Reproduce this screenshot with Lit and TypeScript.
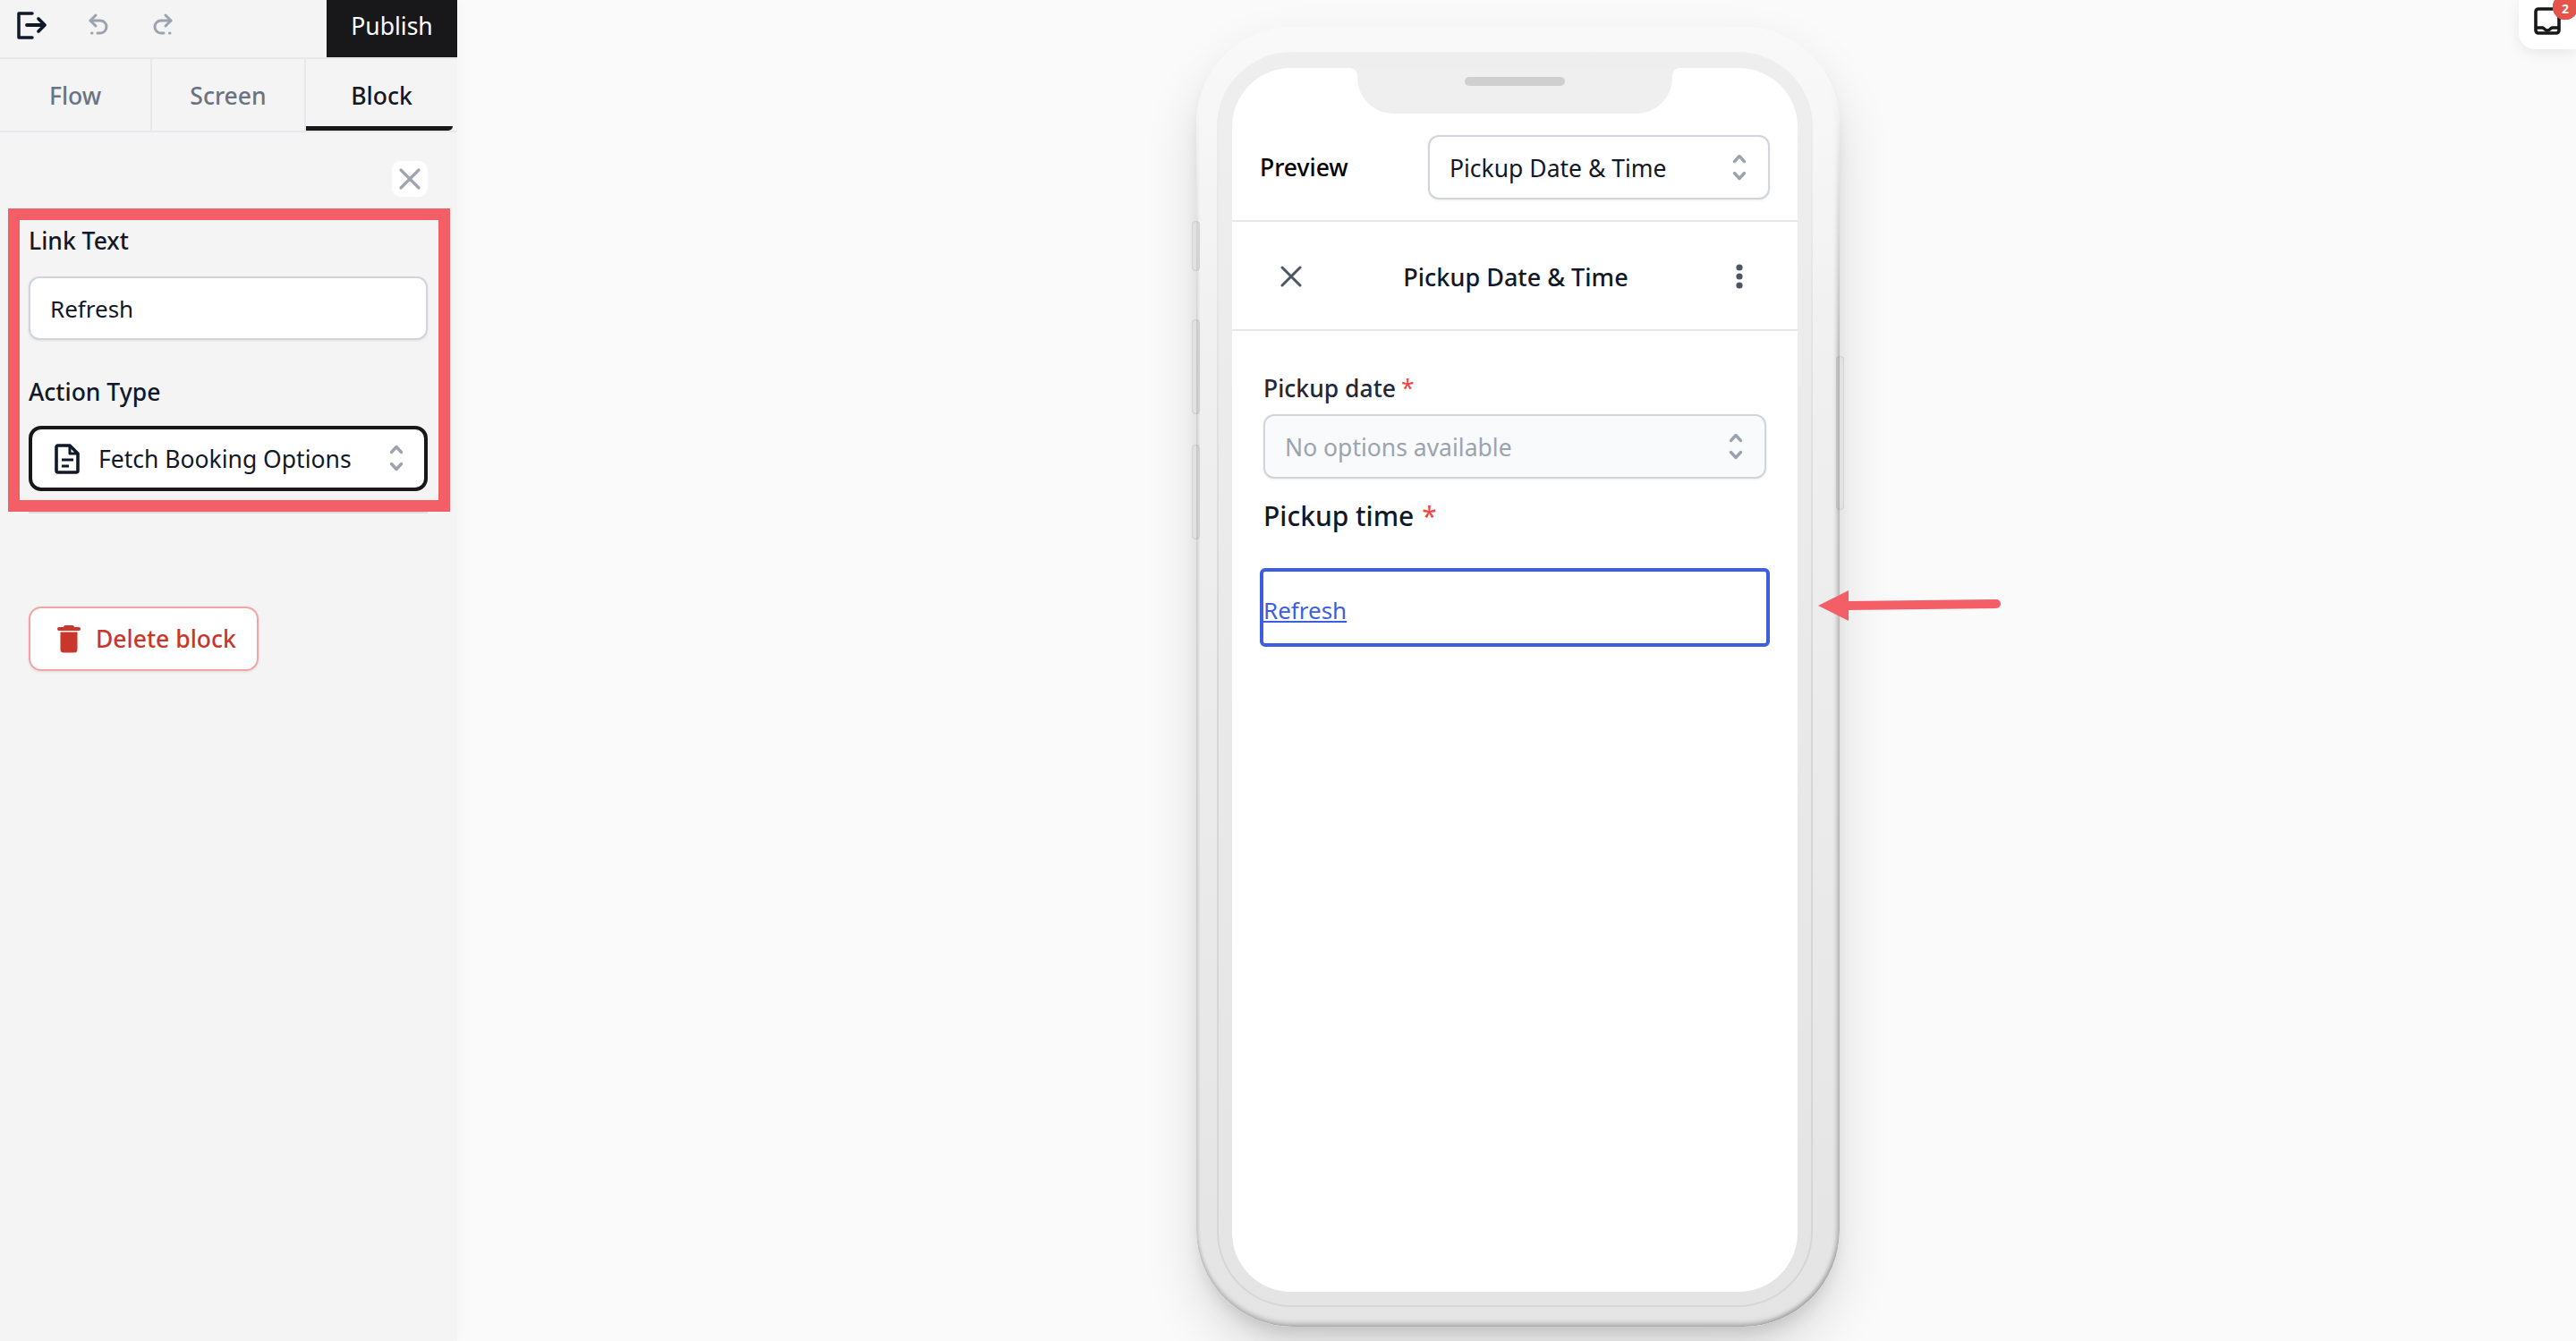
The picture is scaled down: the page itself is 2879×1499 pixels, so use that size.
import { LitElement, html, css } from "lit";
import { customElement } from "lit/decorators.js";

const chevrons = (cls: string) => html`<svg class=${cls} viewBox="0 0 16 32" fill="none" stroke="currentColor" stroke-width="3.4" stroke-linecap="round" stroke-linejoin="round"><path d="M2.500 9.500 8 3.500l5.500 6"/><path d="M2.500 22.500 8 28.500l5.500-6"/></svg>`;

@customElement("app-root")
export class AppRoot extends LitElement {
  static styles = css`
    :host { display: block; height: 1499px; overflow: hidden; font-family: "Noto Sans", "Open Sans", sans-serif; color: #111827; position: relative; }
    * { box-sizing: border-box; }
    .page { display: flex; height: 1499px; background: #fafafa; }
    .side { width: 511px; flex: none; background: #f4f4f5; box-shadow: 4px 0 12px rgba(0,0,0,.02); position: relative; display: flex; flex-direction: column; }
    .top { height: 66px; flex: none; display: flex; border-bottom: 2px solid #e7e7ec; }
    .tools { flex: 1; position: relative; }
    .tool { position: absolute; top: 12px; }
    .publish { width: 146px; height: 64px; background: #18181b; color: #fff; display: flex; align-items: center; justify-content: center; font-size: 26.5px; padding-bottom: 6px; }
    .tabs { height: 82px; flex: none; display: flex; border-bottom: 2px solid #e7e7ec; }
    .tab { width: 170px; display: flex; align-items: center; justify-content: center; font-size: 26.5px; font-weight: 500; color: #6b7280; border-right: 2px solid #e7e7ec; padding-top: 2px; }
    .tab.wide { width: 172px; }
    .tab.on { color: #111827; border-right: 0; width: 169px; position: relative; }
    .tab.on::after { content: ""; position: absolute; left: 0; right: 5px; bottom: 0; height: 5px; background: #18181b; border-bottom-right-radius: 8px; }
    .body { padding: 32px 33px 0 32px; display: flex; flex-direction: column; }
    .close { align-self: flex-end; width: 40px; height: 40px; border-radius: 10px; background: #fff; display: flex; align-items: center; justify-content: center; color: #a1a5b0; }
    .fields { width: 446px; height: 354px; border-bottom: 2px solid #dcdce4; }
    .label { font-size: 26.5px; font-weight: 500; line-height: 40px; color: #111827; }
    .l1 { margin-top: 29px; }
    .l2 { margin-top: 38px; }
    .input { height: 71px; margin-top: 20px; border-radius: 12px; border: 2px solid #d1d5db; background: #fff; display: flex; align-items: center; padding-left: 22px; font-size: 26px; box-shadow: 0 1px 3px rgba(0,0,0,.08); }
    .action { height: 73px; margin-top: 18px; border: 4px solid #18181b; border-radius: 14px; background: #fff; display: flex; align-items: center; position: relative; font-size: 26.5px; }
    .doc { width: 28px; height: 34px; margin-left: 25px; margin-right: 21px; }
    .action .chev { position: absolute; right: 23px; top: 16px; }
    .chev { width: 16px; height: 32px; color: #9ca3af; }
    .del { width: 257px; height: 72px; margin-top: 104px; border: 2px solid #f3a5a5; border-radius: 14px; background: #fff; color: #c8362c; display: flex; align-items: center; font-size: 26.5px; font-weight: 500; box-shadow: 0 1px 3px rgba(0,0,0,.1); }
    .del svg { width: 26px; height: 32px; margin-left: 30px; margin-right: 17px; }
    .red { position: absolute; left: 9px; top: 233px; width: 494px; height: 339px; border: 13px solid #f45f67; pointer-events: none; }
    .main { flex: 1; display: flex; justify-content: center; padding: 30px 0 0 3px; position: relative; }
    .phone { width: 719px; height: 1453px; border-radius: 108px; padding: 28px 30px 22px 23px; position: relative;
      background: linear-gradient(#f9f9f9, #f0f0f0 25%, #e4e4e4 100%);
      box-shadow: 0 30px 60px rgba(0,0,0,.13), 0 14px 18px -6px rgba(0,0,0,.12); }
    .phone::after { content: ""; position: absolute; inset: 0; border-radius: 108px; pointer-events: none;
      box-shadow: inset 0 -4px 5px rgba(0,0,0,.2), inset -4px 0 4px rgba(0,0,0,.15), inset 3px 0 3px rgba(0,0,0,.05);
      -webkit-mask-image: linear-gradient(transparent 60px, #000 360px); mask-image: linear-gradient(transparent 60px, #000 360px); }
    .bezel { height: 100%; border-radius: 84px; padding: 16px 15px 15px; border: 2px solid transparent;
      background: linear-gradient(#eeeeee, #e4e4e4) padding-box, linear-gradient(#efefef, #d6d6d6 50%) border-box; }
    .screen { height: 100%; border-radius: 66px; background: #fff; position: relative; overflow: hidden; }
    .notch { position: absolute; left: 140px; top: 0; width: 352px; height: 51px; background: #efefef; border-radius: 0 0 40px 40px; display: flex; justify-content: center; padding-top: 10px; }
    .notch::before, .notch::after { content: ""; position: absolute; top: 0; width: 8px; height: 8px; }
    .notch::before { left: -8px; background: radial-gradient(circle at 0 100%, transparent 7.500px, #efefef 8px); }
    .notch::after { right: -8px; background: radial-gradient(circle at 100% 100%, transparent 7.500px, #efefef 8px); }
    .speaker { width: 112px; height: 10px; border-radius: 5px; background: #cfcfcf; }
    .btn { position: absolute; width: 9px; background: #e2e2e2; border-radius: 5px; box-shadow: inset 0 0 2px rgba(0,0,0,.2); }
    .b1 { left: -5px; top: 217px; height: 56px; }
    .b2 { left: -5px; top: 327px; height: 106px; }
    .b3 { left: -5px; top: 467px; height: 106px; }
    .b4 { right: -5px; top: 368px; height: 172px; }
    .prev { height: 172px; padding: 75px 31px 0 31px; display: flex; justify-content: space-between; border-bottom: 2px solid #e5e7eb; }
    .prev b { font-size: 26.5px; font-weight: 500; color: #000; line-height: 72px; }
    .sel { width: 382px; height: 72px; border: 2px solid #d1d5db; border-radius: 12px; display: flex; align-items: center; justify-content: space-between; padding: 0 24px 0 22px; font-size: 26.5px; box-shadow: 0 1px 3px rgba(0,0,0,.08); background: #fff; }
    .sel span, .sel2 span { padding-top: 1px; }
    .head { height: 122px; display: flex; align-items: center; justify-content: space-between; padding: 2px 60px 0 54px; border-bottom: 2px solid #e5e7eb; font-size: 27px; font-weight: 500; }
    .head svg { color: #4b5563; display: block; }
    .head span { margin-left: -6px; }
    .form { padding: 44px 35px 0; }
    .f-label { font-size: 26.5px; font-weight: 500; line-height: 40px; color: #1f2937; }
    .star { color: #ef4444; font-weight: 400; margin-left: 6px; }
    .sel2 { width: 562px; height: 72px; margin-top: 9px; border: 2px solid #d1d5db; border-radius: 12px; background: #f9fafb; color: #9ca3af; display: flex; align-items: center; justify-content: space-between; padding: 0 24px 0 22px; font-size: 26.5px; box-shadow: 0 1px 3px rgba(0,0,0,.08); }
    .big { font-size: 30px; font-weight: 500; line-height: 46px; margin-top: 19px; color: #111827; }
    .big .star { font-size: 30px; margin-left: 9px; }
    .linkbox { width: 570px; height: 88px; margin: 35px 0 0 -4px; border: 4px solid #3b5fe0; border-radius: 6px; padding-top: 19px; font-size: 26px; line-height: 48px; }
    .linkbox a { color: #3b5fe0; text-decoration: underline; }
    .arrow { position: absolute; left: 1521px; top: 655px; }
    .inbox { position: absolute; right: 0; top: 0; width: 64px; height: 55px; background: #fff; border-bottom-left-radius: 18px; box-shadow: 0 4px 16px rgba(0,0,0,.08); }
    .inbox svg { position: absolute; left: 17px; top: 8px; }
    .badge { position: absolute; left: 37px; top: 0; width: 27px; height: 23px; background: radial-gradient(circle at 15px 8px, #e5534b 14px, transparent 14.500px); color: #fff; font-size: 14px; line-height: 19px; font-weight: 700; text-align: center; padding-left: 3px; }
  `;

  render() {
    return html`
      <div class="page">
        <aside class="side">
          <div class="top">
            <div class="tools">
              <svg class="tool" style="left:18px" width="36" height="34" viewBox="0 0 36 34" fill="none" stroke="#111827" stroke-width="3.5" stroke-linejoin="round" stroke-linecap="round"><path d="M18 3H3v27h15"/><path d="M12 16h19M25 9l7 7-7 7" stroke-width="3.8"/></svg>
              <svg class="tool" style="left:96px" width="28" height="30" viewBox="0 0 28 30" fill="none" stroke="#9ca3af" stroke-width="3" stroke-linecap="round" stroke-linejoin="round"><path d="M11 5 5 11l6 6"/><path d="M5 11h11a7 7 0 0 1 0 14h-3"/><path d="M6.500 25h.5"/></svg>
              <svg class="tool" style="left:168px" width="28" height="30" viewBox="0 0 28 30" fill="none" stroke="#9ca3af" stroke-width="3" stroke-linecap="round" stroke-linejoin="round"><path d="m17 5 6 6-6 6"/><path d="M23 11H12a7 7 0 0 0 0 14h3"/><path d="M21.500 25h.5"/></svg>
            </div>
            <div class="publish">Publish</div>
          </div>
          <div class="tabs">
            <div class="tab">Flow</div>
            <div class="tab wide">Screen</div>
            <div class="tab on">Block</div>
          </div>
          <div class="body">
            <div class="close"><svg width="26" height="26" viewBox="0 0 26 26" stroke="currentColor" stroke-width="3.2" stroke-linecap="round"><path d="M3 3l20 20M23 3 3 23"/></svg></div>
            <div class="fields">
              <div class="label l1">Link Text</div>
              <div class="input">Refresh</div>
              <div class="label l2">Action Type</div>
              <div class="action">
                <svg class="doc" viewBox="0 0 28 34" fill="none" stroke="#111827" stroke-width="3.6" stroke-linejoin="round"><path d="M2 4a2 2 0 0 1 2-2h13l9 9v19a2 2 0 0 1-2 2H4a2 2 0 0 1-2-2z"/><path d="M17 2v9h9" stroke-width="3"/><path d="M8 18h13M8 25h8" stroke-width="3"/></svg>
                <span>Fetch Booking Options</span>
                ${chevrons("chev")}
              </div>
            </div>
            <div class="del">
              <svg viewBox="0 0 26 32" fill="#c8362c"><path d="M9 1h8a2 2 0 0 1 2 2h5a1.500 1.500 0 0 1 0 4H2a1.500 1.500 0 0 1 0-4h5a2 2 0 0 1 2-2z"/><path d="M3.500 8.500h19V28a3.500 3.500 0 0 1-3.500 3.500H7A3.500 3.500 0 0 1 3.500 28z"/></svg>
              <span>Delete block</span>
            </div>
          </div>
          <div class="red"></div>
        </aside>
        <main class="main">
          <div class="phone">
            <i class="btn b1"></i><i class="btn b2"></i><i class="btn b3"></i><i class="btn b4"></i>
            <div class="bezel">
              <div class="screen">
                <div class="notch"><div class="speaker"></div></div>
                <div class="prev">
                  <b>Preview</b>
                  <div class="sel"><span>Pickup Date &amp; Time</span>${chevrons("chev")}</div>
                </div>
                <div class="head">
                  <svg width="24" height="24" viewBox="0 0 24 24" stroke="currentColor" stroke-width="3" stroke-linecap="round"><path d="M2 2l20 20M22 2 2 22"/></svg>
                  <span>Pickup Date &amp; Time</span>
                  <svg width="10" height="28" viewBox="0 0 10 28" fill="currentColor"><circle cx="5" cy="4" r="3.600"/><circle cx="5" cy="14" r="3.600"/><circle cx="5" cy="24" r="3.600"/></svg>
                </div>
                <div class="form">
                  <div class="f-label">Pickup date<span class="star">*</span></div>
                  <div class="sel2"><span>No options available</span>${chevrons("chev")}</div>
                  <div class="big">Pickup time<span class="star">*</span></div>
                  <div class="linkbox"><a href="#">Refresh</a></div>
                </div>
              </div>
            </div>
          </div>
          <svg class="arrow" width="206" height="44" viewBox="0 0 206 44" fill="#f45f67"><path d="M0 22 34 5v12l165-2a5 5 0 0 1 0 10L34 27v12z"/></svg>
        </main>
      </div>
      <div class="inbox">
        <svg width="30" height="32" viewBox="0 0 30 32" fill="none" stroke="#18181b" stroke-width="3.600" stroke-linejoin="round"><rect x="2" y="2" width="26" height="27" rx="3"/><path d="M2 23h8c1 0 2 3 5 3s4-3 5-3h8"/></svg>
        <div class="badge">2</div>
      </div>
    `;
  }
}
